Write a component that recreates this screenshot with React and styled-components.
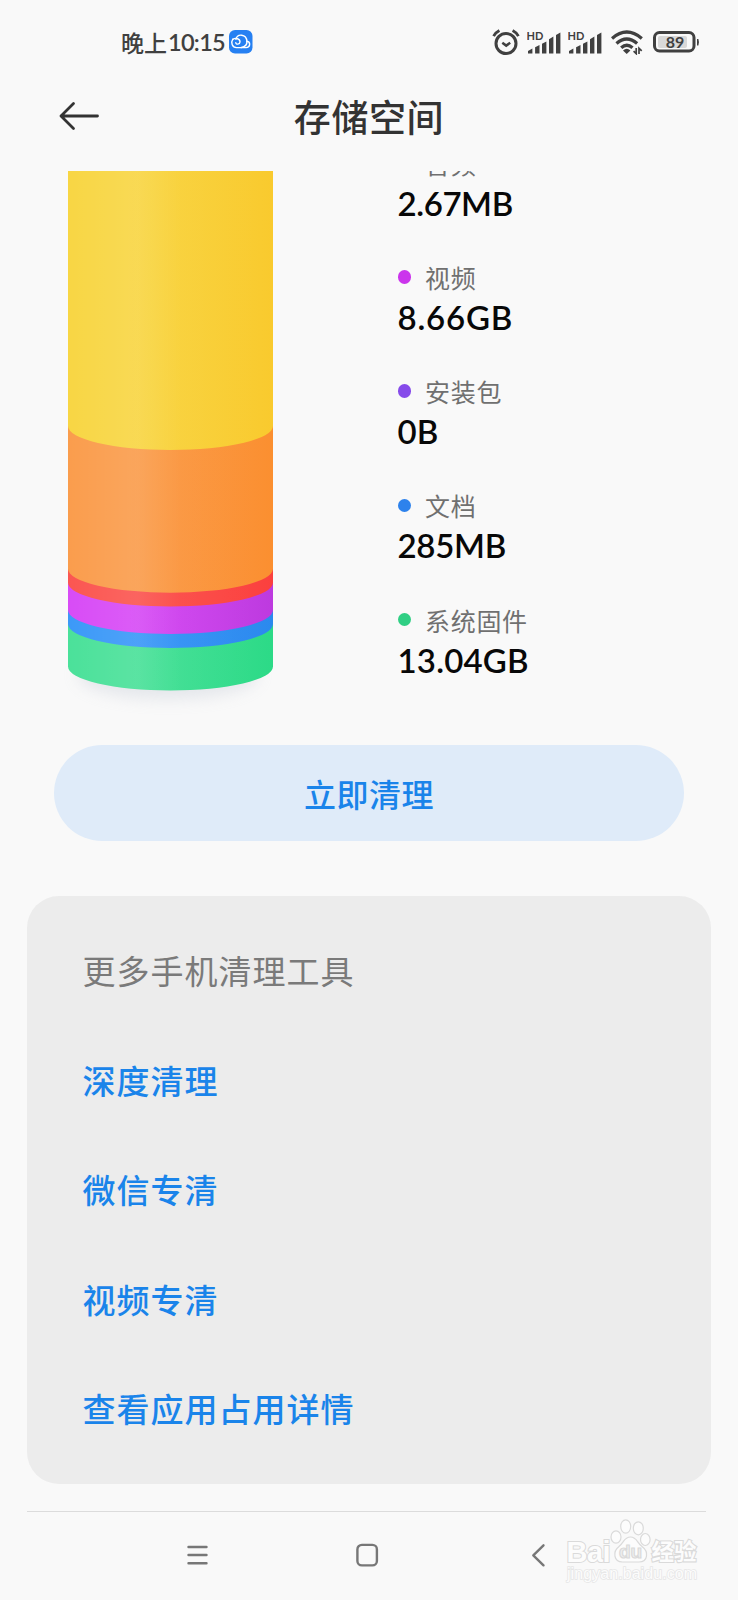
import React from "react";
import styled, { createGlobalStyle, css } from "styled-components";

const GlobalStyle = createGlobalStyle`
  * {
    box-sizing: border-box;
  }

  body {
    margin: 0;
    background: #f9f9f9;
    font-family: Lato, "Noto Sans CJK SC", sans-serif;
  }
`;

const blue = "#1a84ea";

const cjkFont = css`
  font-family: "Noto Sans CJK SC", sans-serif;
`;

const Screen = styled.div`
  display: flex;
  flex-direction: column;
  width: 738px;
  height: 1600px;
  overflow: hidden;
  background: #f9f9f9;
`;

const StatusBar = styled.div`
  display: flex;
  align-items: center;
  height: 85px;
  padding: 0 38px 0 121px;
  color: #404040;
`;

const Clock = styled.div`
  display: flex;
  align-items: center;
  width: 102px;
  font-size: 23.5px;
  font-weight: 600;
  letter-spacing: -0.7px;
  line-height: 34px;
  white-space: nowrap;
`;

const ClockPrefix = styled.span`
  ${cjkFont};
  margin-right: 1px;
  font-size: 23px;
  font-weight: 500;
  letter-spacing: 0;
`;

const CloudBadge = styled.svg`
  display: block;
  margin-left: 6px;
`;

const StatusIcons = styled.div`
  display: flex;
  align-items: center;
  margin-left: auto;

  svg {
    display: block;
  }
`;

const SignalIcon = styled.svg`
  margin-left: ${props => props.$gap}px;
`;

const WifiIcon = styled.svg`
  margin-left: 8px;
`;

const BatteryIcon = styled.svg`
  margin-left: 10px;
`;

const Header = styled.header`
  display: grid;
  grid-template-columns: 120px 1fr 120px;
  align-items: center;
  height: 86px;
  padding-bottom: 23px;
`;

const BackButton = styled.button`
  justify-self: end;
  margin-right: 20px;
  padding: 0;
  border: 0;
  background: none;

  svg {
    display: block;
  }
`;

const Title = styled.h1`
  ${cjkFont};
  margin: 0;
  color: #333;
  font-size: 37px;
  font-weight: 500;
  line-height: 52px;
  letter-spacing: 0.6px;
  text-align: center;
`;

const Usage = styled.section`
  display: flex;
  height: 575px;
  padding-left: 38px;
  overflow: hidden;
`;

const Chart = styled.svg`
  flex: none;
  width: 265px;
  height: 560px;
`;

const Legend = styled.ul`
  margin: -30px 0 0 94.5px;
  padding: 0;
  list-style: none;
`;

const LegendItem = styled.li`
  height: 114.2px;
`;

const LegendLabel = styled.div`
  ${cjkFont};
  display: flex;
  align-items: center;
  height: 44px;
  color: #707070;
  font-size: 25px;
  letter-spacing: 0.7px;
`;

const Dot = styled.span`
  width: 13.5px;
  height: 13.5px;
  margin-right: 14px;
  border-radius: 50%;
  background: ${props => props.$color};
`;

const LegendValue = styled.div`
  color: #080808;
  font-size: 33px;
  font-weight: 600;
  line-height: 37px;
  letter-spacing: ${props => props.$spacing}px;
`;

const CleanButton = styled.button`
  ${cjkFont};
  flex: none;
  height: 96px;
  margin: 0 54px;
  border: 0;
  border-radius: 48px;
  background: #dfebf9;
  color: ${blue};
  font-size: 32px;
  font-weight: 500;
  letter-spacing: 0.5px;
`;

const Tools = styled.section`
  ${cjkFont};
  flex: none;
  height: 588px;
  margin: 55px 27px 0;
  padding: 20px 56px 0 55.5px;
  border-radius: 32px;
  background: #ececec;
`;

const ToolsTitle = styled.h2`
  margin: 0;
  color: #7a7a7a;
  font-size: 33px;
  font-weight: 400;
  line-height: 109.5px;
  letter-spacing: 1px;
`;

const ToolLink = styled.a`
  display: block;
  color: ${blue};
  font-size: 33px;
  font-weight: 500;
  line-height: 109.5px;
  letter-spacing: 1px;
`;

const NavBar = styled.nav`
  position: relative;
  display: flex;
  align-items: center;
  height: 89px;
  margin: 27px 32px 0 27px;
  padding: 0 0 2px 158px;
  border-top: 1px solid #dcdcdc;

  svg {
    display: block;
  }
`;

const NavIcon = styled.svg`
  margin-right: ${props => props.$gap || 0}px;
`;

const Watermark = styled.div`
  position: absolute;
  left: 538px;
  top: 6px;
`;

// segments of the storage cylinder, top to bottom; end is the lowest point
const segments = [
  { id: "yellow", end: 279, from: "#f8d644", to: "#f9ca2e" },
  { id: "orange", end: 421.7, from: "#fa9d4d", to: "#fb8f30" },
  { id: "red", end: 435.5, from: "#fb5651", to: "#fb403e" },
  { id: "purple", end: 463, from: "#d84cf6", to: "#bd3adf" },
  { id: "blue", end: 477, from: "#3c99f8", to: "#2b89ee" },
  { id: "green", end: 519.5, from: "#4be19a", to: "#2cda87" }
];

const legend = [
  { name: "音频", value: "2.67MB", color: "#f84a48", spacing: -0.4 },
  { name: "视频", value: "8.66GB", color: "#cb35ec", spacing: 0.8 },
  { name: "安装包", value: "0B", color: "#864bea", spacing: 0.2 },
  { name: "文档", value: "285MB", color: "#2d82ec", spacing: -0.3 },
  { name: "系统固件", value: "13.04GB", color: "#30cf84", spacing: 0.2 }
];

const tools = ["深度清理", "微信专清", "视频专清", "查看应用占用详情"];

const segmentPath = end =>
  `M30 0H235V${end - 24}A102.5 24 0 0 1 30 ${end - 24}Z`;

const Cylinder = () => (
  <Chart viewBox="0 0 265 560">
    <defs>
      {segments.map(({ id, from, to }) => (
        <linearGradient id={id} key={id}>
          <stop offset="0" stopColor={from} />
          <stop offset="0.3" stopColor={from} />
          <stop offset="1" stopColor={to} />
        </linearGradient>
      ))}
      <linearGradient id="shine">
        <stop offset="0" stopColor="#fff" stopOpacity="0" />
        <stop offset="0.34" stopColor="#fff" stopOpacity="0.09" />
        <stop offset="0.55" stopColor="#fff" stopOpacity="0.01" />
        <stop offset="1" stopColor="#fff" stopOpacity="0" />
      </linearGradient>
      <filter id="soft" x="-20%" y="-50%" width="140%" height="200%">
        <feGaussianBlur stdDeviation="8" />
      </filter>
    </defs>
    <ellipse
      cx="130"
      cy="504"
      rx="90"
      ry="24"
      fill="#b4bccb"
      opacity="0.3"
      filter="url(#soft)"
    />
    {[...segments].reverse().map(({ id, end }) => (
      <path key={id} d={segmentPath(end)} fill={`url(#${id})`} />
    ))}
    <path d={segmentPath(519.5)} fill="url(#shine)" />
  </Chart>
);

const Signal = ({ gap }) => (
  <SignalIcon $gap={gap} width="35" height="26" viewBox="0 0 35 26">
    <text
      x="-0.5"
      y="11"
      fontFamily="Lato, sans-serif"
      fontSize="11"
      fontWeight="700"
      fill="#404040"
    >
      HD
    </text>
    <g fill="#404040">
      <path d="M1 24.5v-2.6l4.4-2.4v5z" />
      <path d="M8.1 24.5v-6.2l4.4-2.4v8.6z" />
      <path d="M15 24.5v-9.7l4.4-2.4v12.1z" />
      <path d="M22 24.5V10.2l4.4-2.8v17.1z" />
      <path d="M29 24.5V6l4.4-2.5v21z" />
    </g>
  </SignalIcon>
);

const StatusRow = () => (
  <StatusBar>
    <Clock>
      <ClockPrefix>晚上</ClockPrefix>10:15
    </Clock>
    <CloudBadge width="24" height="24" viewBox="0 0 24 24">
      <rect width="23.5" height="23.5" rx="6" fill="#2680f2" />
      <g fill="none" stroke="#fff" strokeWidth="1.4" strokeLinecap="round">
        <path d="M3.8 9.2C1.400 13 3.400 17.600 7.500 17.600H17c4.600-.2 4.800-5.600.9-6.300C17.400 3.600 8.200 3.400 6.900 9.300" />
        <path d="M3.800 9.300c3-1.900 7.400-.5 7.200 2.700-.2 2.600-4 2.900-4.200.7" />
        <path d="M17.900 11.300c.3 3-2 5.500-5.600 6.200" />
      </g>
    </CloudBadge>
    <StatusIcons>
      <svg width="28" height="28" viewBox="0 0 28 28" fill="none">
        <circle cx="14" cy="15.5" r="10" stroke="#404040" strokeWidth="3" />
        <path
          d="M10.3 14.8l3.9 2.8 4-2.8"
          stroke="#404040"
          strokeWidth="2.5"
        />
        <path
          d="M1.6 8.1Q3.4 4.7 7.4 2.600M20.6 2.600q4 2.1 5.8 5.5"
          stroke="#404040"
          strokeWidth="2.8"
        />
      </svg>
      <Signal gap={7} />
      <Signal gap={6} />
      <WifiIcon width="32" height="26" viewBox="0 0 32 26" fill="none">
        <g stroke="#404040" strokeWidth="3.3">
          <path d="M1 9.5Q15.7-3.4 30.8 9.5" />
          <path d="M5.5 14.5q10.2-9 20.6 0" />
          <path d="M10.2 18.8q5.6-5 11.3 0" />
        </g>
        <path d="M12 21.5q3.8-3.4 7.4 0L15.7 25z" fill="#404040" />
        <path
          d="M25.2 19v5.600l-2.600-2.500M28 25v-5.800l2.700 2.600"
          stroke="#404040"
          strokeWidth="1.7"
        />
      </WifiIcon>
      <BatteryIcon width="47" height="22" viewBox="0 0 47 22">
        <rect x="5" y="5" width="29" height="12" rx="2" fill="#d8d8d8" />
        <rect
          x="1.5"
          y="1.5"
          width="39.5"
          height="18.5"
          rx="5"
          fill="none"
          stroke="#404040"
          strokeWidth="3"
        />
        <path d="M44 8h1.4q1.2 3 0 6.5H44z" fill="#404040" />
        <text
          x="22"
          y="16.6"
          textAnchor="middle"
          fontFamily="Lato, sans-serif"
          fontSize="16"
          fontWeight="700"
          fill="#404040"
        >
          89
        </text>
      </BatteryIcon>
    </StatusIcons>
  </StatusBar>
);

const BaiduMark = () => (
  <Watermark>
    <svg width="140" height="72" viewBox="0 0 140 72">
      <g fill="#fcfcfc" stroke="#dadada" strokeWidth="1.2">
        <text
          x="1.5"
          y="43.5"
          fontFamily="Liberation Sans, sans-serif"
          fontWeight="700"
          fontSize="29"
          textLength="44"
          paintOrder="stroke"
          strokeWidth="2"
        >
          Bai
        </text>
        <ellipse cx="51" cy="19" rx="5" ry="6.2" />
        <ellipse cx="60.7" cy="8.500" rx="5" ry="6.700" />
        <ellipse cx="73.3" cy="10.300" rx="5" ry="6.500" />
        <ellipse cx="80.300" cy="21.500" rx="4.800" ry="6" />
        <path d="M65.500 19c6.500 0 6.500 6 11.500 9.500 7 5 6 15.500-3 15.500H57.500c-9 0-10-10.500-3.500-15.500 5-4 5-9.500 11.500-9.500z" />
        <text
          x="54"
          y="40"
          fontFamily="Liberation Sans, sans-serif"
          fontWeight="700"
          fontSize="19"
          textLength="23"
          fill="#efefef"
        >
          du
        </text>
        <text
          x="86.5"
          y="41.5"
          fontFamily="Noto Sans CJK SC, sans-serif"
          fontWeight="700"
          fontSize="22.5"
          paintOrder="stroke"
          strokeWidth="2.2"
        >
          经验
        </text>
        <text
          x="2"
          y="61"
          fontFamily="Liberation Sans, sans-serif"
          fontSize="16"
          textLength="130"
          paintOrder="stroke"
          strokeWidth="1.5"
          stroke="#e6e6e6"
        >
          jingyan.baidu.com
        </text>
      </g>
    </svg>
  </Watermark>
);

const BottomNav = () => (
  <NavBar>
    <NavIcon $gap={147} width="24" height="24" viewBox="0 0 24 24">
      <path
        d="M3.5 4h18M3.5 12h18M3.5 20.3h18"
        stroke="#777"
        strokeWidth="2.4"
        strokeLinecap="round"
      />
    </NavIcon>
    <NavIcon $gap={150} width="24" height="24" viewBox="0 0 24 24">
      <rect
        x="1.4"
        y="1.9"
        width="19.5"
        height="20.5"
        rx="4.5"
        fill="none"
        stroke="#777"
        strokeWidth="2.4"
      />
    </NavIcon>
    <NavIcon width="16" height="24" viewBox="0 0 16 24">
      <path
        d="M13.5 2.3L3.300 12.300l10.200 10"
        fill="none"
        stroke="#777"
        strokeWidth="2.4"
        strokeLinecap="round"
        strokeLinejoin="round"
      />
    </NavIcon>
    <BaiduMark />
  </NavBar>
);

export default function App() {
  return (
    <>
      <GlobalStyle />
      <Screen>
        <StatusRow />
        <Header>
          <BackButton aria-label="返回">
            <svg width="42" height="30" viewBox="0 0 42 30">
              <path
                d="M15.5 2.5L3 15l12.5 12.5M3 15h36.500"
                fill="none"
                stroke="#333"
                strokeWidth="2.8"
                strokeLinecap="round"
                strokeLinejoin="round"
              />
            </svg>
          </BackButton>
          <Title>存储空间</Title>
        </Header>
        <Usage>
          <Cylinder />
          <Legend>
            {legend.map(({ name, value, color, spacing }) => (
              <LegendItem key={name}>
                <LegendLabel>
                  <Dot $color={color} />
                  {name}
                </LegendLabel>
                <LegendValue $spacing={spacing}>{value}</LegendValue>
              </LegendItem>
            ))}
          </Legend>
        </Usage>
        <CleanButton>立即清理</CleanButton>
        <Tools>
          <ToolsTitle>更多手机清理工具</ToolsTitle>
          {tools.map(tool => (
            <ToolLink key={tool}>{tool}</ToolLink>
          ))}
        </Tools>
        <BottomNav />
      </Screen>
    </>
  );
}
